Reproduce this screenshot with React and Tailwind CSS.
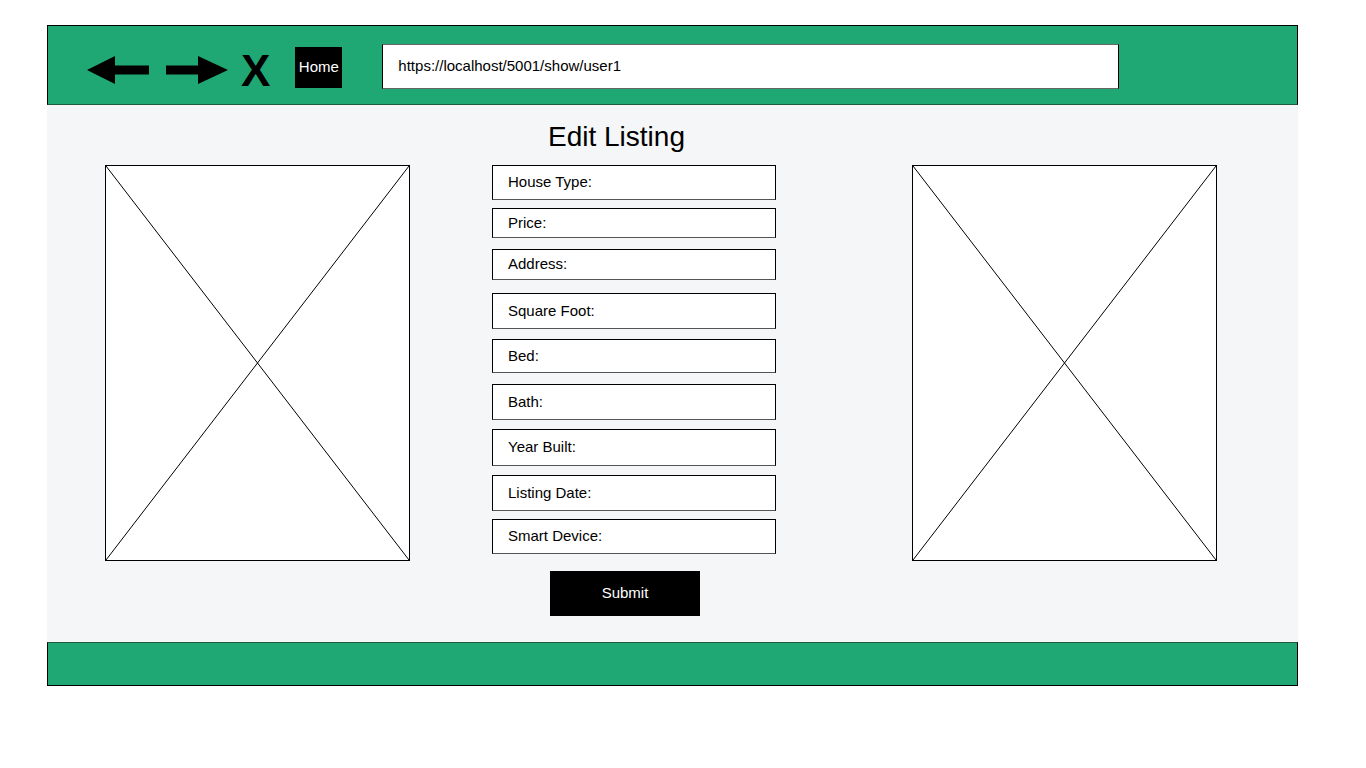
import React from "react";

const fields = [
  { label: "House Type:", cls: "h-[35px]" },
  { label: "Price:", cls: "mt-[8px] h-[30px]" },
  { label: "Address:", cls: "mt-[11px] h-[31px]" },
  { label: "Square Foot:", cls: "mt-[13px] h-[36px]" },
  { label: "Bed:", cls: "mt-[10px] h-[34px]" },
  { label: "Bath:", cls: "mt-[11px] h-[36px]" },
  { label: "Year Built:", cls: "mt-[9px] h-[37px]" },
  { label: "Listing Date:", cls: "mt-[9px] h-[36px]" },
  { label: "Smart Device:", cls: "mt-[8px] h-[35px]" },
];

const Placeholder = ({ className }) => (
  <div className={`relative w-[305px] h-[396px] bg-white border border-black ${className}`}>
    <svg className="absolute inset-0 w-full h-full" viewBox="0 0 100 100" preserveAspectRatio="none">
      <line x1="0" y1="0" x2="100" y2="100" stroke="black" strokeWidth="1" vectorEffect="non-scaling-stroke" />
      <line x1="100" y1="0" x2="0" y2="100" stroke="black" strokeWidth="1" vectorEffect="non-scaling-stroke" />
    </svg>
  </div>
);

const LeftArrow = () => (
  <svg width="62" height="28" viewBox="0 0 62 28">
    <polygon points="0,14 28,0 28,9.5 62,9.5 62,18.5 28,18.5 28,28" fill="black" />
  </svg>
);

const RightArrow = () => (
  <svg width="62" height="28" viewBox="0 0 62 28">
    <polygon points="62,14 32,0 32,9.5 0,9.5 0,18.5 32,18.5 32,28" fill="black" />
  </svg>
);

export default function App() {
  return (
    <div className="min-h-screen bg-white pt-[25px] font-['Liberation_Sans',Arial,sans-serif] text-black">
      <div className="ml-[47px] w-[1251px]">
        {/* top bar */}
        <div className="h-[80px] bg-[#20a874] border border-black border-b-[#1e5a40] flex items-start">
          <div className="ml-[39px] mt-[30px]">
            <LeftArrow />
          </div>
          <div className="ml-[17px] mt-[30px]">
            <RightArrow />
          </div>
          <div className="ml-[13px] mt-[20px] text-[44px] font-bold leading-[50px]">X</div>
          <div className="ml-[25px] mt-[21px] w-[47px] h-[41px] bg-black text-white text-[15px] flex items-center justify-center">
            Home
          </div>
          <div className="ml-[40px] mt-[18px] w-[737px] h-[45px] bg-white border border-black border-b-[#666] border-t-[#666] flex items-center pl-[15px] text-[15px]">
            https://localhost/5001/show/user1
          </div>
        </div>

        {/* content */}
        <div className="h-[537px] bg-[#f5f6f8] pt-[16px]">
          <h1 className="pl-[501px] text-[28px] leading-[32px]">Edit Listing</h1>
          <div className="mt-[12px] flex items-start">
            <Placeholder className="ml-[58px]" />
            <div className="ml-[82px] w-[284px] flex flex-col">
              {fields.map((f) => (
                <div
                  key={f.label}
                  className={`${f.cls} bg-white border border-black border-b-[#555] flex items-center pl-[15px] text-[15px]`}
                >
                  {f.label}
                </div>
              ))}
              <button className="ml-[58px] mt-[17px] w-[150px] h-[45px] bg-black text-white text-[15px]">
                Submit
              </button>
            </div>
            <Placeholder className="ml-[136px]" />
          </div>
        </div>

        {/* footer */}
        <div className="h-[44px] bg-[#20a874] border border-black border-t-[#1e5a40]" />
      </div>
    </div>
  );
}
